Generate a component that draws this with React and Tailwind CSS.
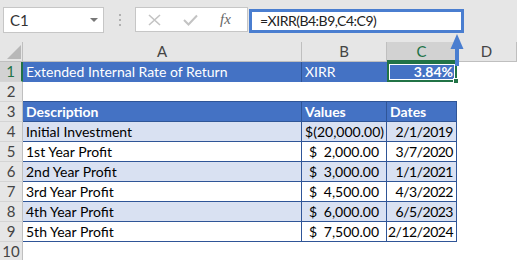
import React from 'react';

const FONT = { fontFamily: 'Lato, "Open Sans", "Liberation Sans", sans-serif' };

const rows = [
  { n: 4, desc: 'Initial Investment', neg: true, value: '(20,000.00)', date: '2/1/2019' },
  { n: 5, desc: '1st Year Profit', value: '2,000.00', date: '3/7/2020' },
  { n: 6, desc: '2nd Year Profit', value: '3,000.00', date: '1/1/2021' },
  { n: 7, desc: '3rd Year Profit', value: '4,500.00', date: '4/3/2022' },
  { n: 8, desc: '4th Year Profit', value: '6,000.00', date: '6/5/2023' },
  { n: 9, desc: '5th Year Profit', value: '7,500.00', date: '2/12/2024' },
];

const RowHead = ({ n, active }) => (
  <div
    className={`flex items-center justify-center border-b border-[#d4d4d4] text-[15px] ${
      active ? 'bg-[#d2d2d2] text-[#217346] border-r-2 border-r-[#217346]' : 'bg-[#e6e6e6] text-[#444] border-r border-r-[#bfbfbf]'
    }`}
  >
    {n}
  </div>
);

const Toolbar = () => (
  <div className="flex h-[42px] items-start bg-[#e6e6e6] pl-[3px] pt-[7px]">
    {/* name box */}
    <div className="flex h-[26px] w-[101px] items-center justify-between border border-[#c6c6c6] bg-white pl-[6px] pr-[5px] text-[15px] text-[#333]">
      <span>C1</span>
      <svg width="8" height="5" viewBox="0 0 8 5">
        <polygon points="0,0 8,0 4,4" fill="#777" />
      </svg>
    </div>
    <div className="flex h-[26px] w-[31px] flex-col items-center justify-center gap-[3px]">
      <span className="h-[2px] w-[2px] bg-[#b0b0b0]" />
      <span className="h-[2px] w-[2px] bg-[#b0b0b0]" />
      <span className="h-[2px] w-[2px] bg-[#b0b0b0]" />
    </div>
    {/* cancel / enter / fx */}
    <div className="flex h-[25px] w-[113px] items-center border border-[#c6c6c6] bg-white pl-[12px]">
      <svg width="13" height="12" viewBox="0 0 13 12">
        <path d="M1 1 L12 11 M12 1 L1 11" stroke="#c3c3c3" strokeWidth="1.6" />
      </svg>
      <svg className="ml-[22px]" width="15" height="12" viewBox="0 0 15 12">
        <path d="M1 6 L5.5 10.5 L14 1.5" stroke="#c3c3c3" strokeWidth="2" fill="none" />
      </svg>
      <span
        className="ml-[22px] text-[15px] italic text-[#666]"
        style={{ fontFamily: '"Liberation Serif", serif' }}
      >
        fx
      </span>
    </div>
    {/* formula bar */}
    <div className="ml-[1px] mt-[2px] flex h-[24px] w-[215px] items-center border-[3px] border-[#4a7ed0] bg-white pl-[8px] text-[14px] tracking-[-0.5px] text-[#222]">
      =XIRR(B4:B9,C4:C9)
    </div>
  </div>
);

export default function App() {
  return (
    <div className="relative h-[260px] w-[517px] overflow-hidden bg-white text-[14px] leading-none" style={FONT}>
      <Toolbar />
      <div className="grid grid-cols-[23px_279px_85px_70px_60px] auto-rows-[20px]">
        {/* column headers */}
        <div className="flex items-end justify-end border-b border-r border-[#bfbfbf] bg-[#e6e6e6] pb-[2px] pr-[1px]">
          <svg width="14" height="14" viewBox="0 0 14 14">
            <polygon points="14,0 14,14 0,14" fill="#b8b8b8" />
          </svg>
        </div>
        <div className="flex items-center justify-center border-b border-r border-[#bfbfbf] bg-[#e6e6e6] text-[15px] text-[#444]">A</div>
        <div className="flex items-center justify-center border-b border-r border-[#bfbfbf] bg-[#e6e6e6] text-[15px] text-[#444]">B</div>
        <div className="flex items-center justify-center border-b-2 border-r border-b-[#217346] border-r-[#bfbfbf] bg-[#d2d2d2] text-[15px] text-[#217346]">C</div>
        <div className="flex items-center justify-center border-b border-r border-[#bfbfbf] bg-[#e6e6e6] text-[15px] text-[#444]">D</div>

        {/* row 1 */}
        <RowHead n={1} active />
        <div className="flex items-center border-r border-[#2f5597] bg-[#4472c4] pl-[3px] text-white">Extended Internal Rate of Return</div>
        <div className="flex items-center bg-[#4472c4] pl-[3px] text-white">XIRR</div>
        <div className="relative border-2 border-[#217346]">
          <div className="flex h-full items-center justify-end border border-white bg-[#4472c4] pr-[1px] font-bold text-white">3.84%</div>
          <div className="absolute -bottom-[4px] -right-[4px] h-[6px] w-[6px] border border-white bg-[#217346]" />
        </div>
        <div />

        {/* row 2 */}
        <RowHead n={2} />
        <div className="border-b border-[#2f5597]" />
        <div className="border-b border-[#2f5597]" />
        <div className="border-b border-[#2f5597]" />
        <div />

        {/* row 3 */}
        <RowHead n={3} />
        <div className="flex items-center border-b border-r border-[#2f5597] bg-[#4472c4] pl-[3px] font-bold text-white">Description</div>
        <div className="flex items-center border-b border-r border-[#2f5597] bg-[#4472c4] pl-[3px] font-bold text-white">Values</div>
        <div className="flex items-center border-b border-r border-[#2f5597] bg-[#4472c4] pl-[3px] font-bold text-white">Dates</div>
        <div />

        {rows.map((r, i) => {
          const bg = i % 2 === 0 ? 'bg-[#d9e1f2]' : 'bg-white';
          return (
            <React.Fragment key={r.n}>
              <RowHead n={r.n} />
              <div className={`flex items-center border-b border-r border-[#2f5597] pl-[3px] text-black ${bg}`}>{r.desc}</div>
              <div className={`flex items-center justify-between border-b border-r border-[#2f5597] text-black ${bg} ${r.neg ? 'pl-[3px] pr-[2px]' : 'pl-[7px] pr-[7px]'}`}>
                <span>$</span>
                <span>{r.value}</span>
              </div>
              <div className={`flex items-center justify-end border-b border-r border-[#2f5597] pr-[3px] tracking-[-0.5px] text-black ${bg}`}>{r.date}</div>
              <div />
            </React.Fragment>
          );
        })}

        {/* row 10 */}
        <RowHead n={10} />
        <div />
        <div />
        <div />
        <div />
      </div>

      {/* annotation arrow */}
      <svg className="pointer-events-none absolute left-0 top-0" width="517" height="260">
        <rect x="455" y="47" width="4" height="19" fill="#4a7ed0" />
        <polygon points="450.5,49 457,34 463.5,49" fill="#4a7ed0" />
      </svg>
    </div>
  );
}
